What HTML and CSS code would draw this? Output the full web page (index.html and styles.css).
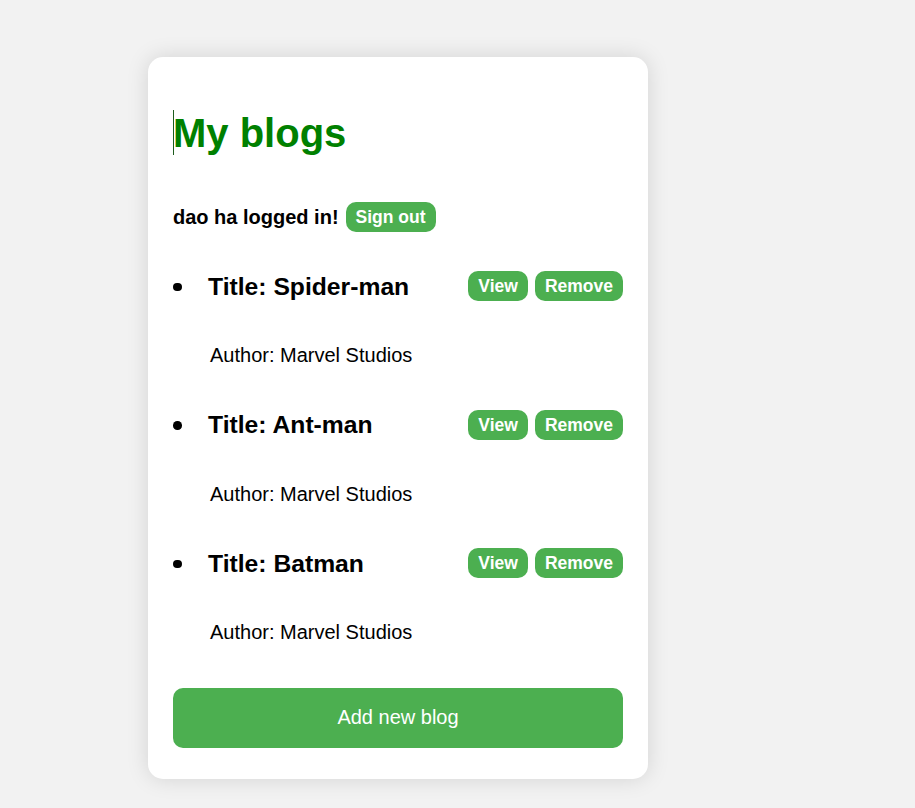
FILE: index.html
```html
<!DOCTYPE html>
<html lang="en">
<head>
<meta charset="utf-8">
<title>My blogs</title>
<link rel="stylesheet" href="styles.css">
</head>
<body>
  <main class="card">
    <h1 class="page-title"><span class="caret"></span>My blogs</h1>
    <div class="status">
      <span class="status-text">dao ha logged in!</span>
      <button class="btn btn-small">Sign out</button>
    </div>
    <ul class="posts">
      <li class="post">
        <div class="post-row">
          <span class="bullet"></span>
          <span class="post-title">Title: Spider-man</span>
          <div class="post-actions">
            <button class="btn btn-small">View</button>
            <button class="btn btn-small">Remove</button>
          </div>
        </div>
        <p class="author">Author: Marvel Studios</p>
      </li>
      <li class="post">
        <div class="post-row">
          <span class="bullet"></span>
          <span class="post-title">Title: Ant-man</span>
          <div class="post-actions">
            <button class="btn btn-small">View</button>
            <button class="btn btn-small">Remove</button>
          </div>
        </div>
        <p class="author">Author: Marvel Studios</p>
      </li>
      <li class="post">
        <div class="post-row">
          <span class="bullet"></span>
          <span class="post-title">Title: Batman</span>
          <div class="post-actions">
            <button class="btn btn-small">View</button>
            <button class="btn btn-small">Remove</button>
          </div>
        </div>
        <p class="author">Author: Marvel Studios</p>
      </li>
    </ul>
    <button class="btn btn-wide">Add new blog</button>
  </main>
</body>
</html>
```

FILE: styles.css
```css
html, body {
  margin: 0;
  background: #f2f2f2;
}

body {
  font-family: "Liberation Sans", Arial, sans-serif;
  color: #000;
  padding: 57px 0 30px 148px;
}

.card {
  width: 500px;
  box-sizing: border-box;
  padding: 25px 25px 31px;
  background: #fff;
  border-radius: 15px;
  box-shadow: 0 0 22px rgba(0, 0, 0, 0.13);
}

.page-title {
  margin: 28px 0 0;
  font-size: 40px;
  line-height: 46px;
  font-weight: 700;
  color: #008000;
}

.caret {
  display: inline-block;
  width: 0;
  height: 45px;
  border-left: 1px solid #1d5c1d;
  margin-right: -1px;
  vertical-align: top;
}

.status {
  display: flex;
  align-items: center;
  gap: 7px;
  margin-top: 46px;
}

.status-text {
  font-size: 20px;
  font-weight: 700;
  line-height: 23px;
}

.btn {
  font-family: "Liberation Sans", Arial, sans-serif;
  background: #4caf50;
  color: #fff;
  border: none;
  cursor: pointer;
}

.btn-small {
  font-size: 17.5px;
  font-weight: 700;
  line-height: 20px;
  padding: 5px 10px;
  border-radius: 10px;
}

.btn-wide {
  display: block;
  width: 100%;
  height: 60px;
  font-size: 20px;
  border-radius: 10px;
}

.posts {
  list-style: none;
  margin: 39px 0 43.5px;
  padding: 0;
  display: flex;
  flex-direction: column;
  gap: 42.3px;
}

.post-row {
  display: flex;
  align-items: center;
  height: 30px;
}

.bullet {
  width: 8.5px;
  height: 8.5px;
  border-radius: 50%;
  background: #000;
  margin: 2px 26.5px 0 0;
  flex: none;
}

.post-title {
  font-size: 24.7px;
  font-weight: 700;
  line-height: 29px;
}

.post-actions {
  margin-left: auto;
  display: flex;
  gap: 7px;
}

.author {
  margin: 43.3px 0 0 37px;
  font-size: 20px;
  line-height: 23px;
}
```
